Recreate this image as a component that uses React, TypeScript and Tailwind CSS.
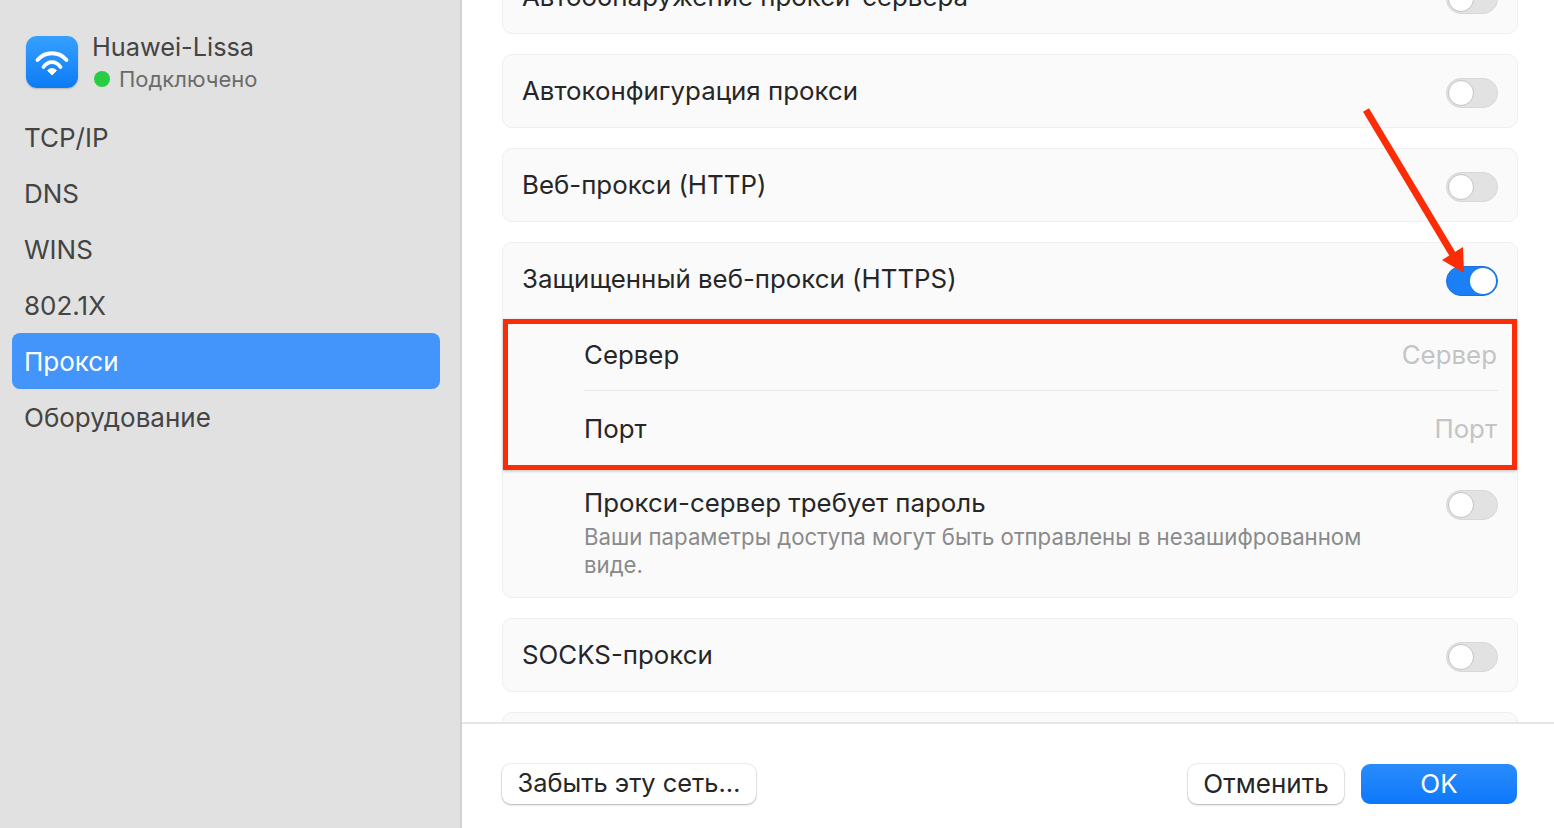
import { FC, ReactNode } from 'react';

const FONT = "font-['Inter','Noto_Sans',sans-serif]";

const Toggle: FC<{ on?: boolean }> = ({ on }) =>
  on ? (
    <div className="mt-[4px] flex h-[30px] w-[52px] shrink-0 items-center justify-end rounded-full border border-[#1a6fd8] bg-[#1b80f5]">
      <div className="mr-px h-[26px] w-[26px] rounded-full bg-white" />
    </div>
  ) : (
    <div className="mt-[4px] flex h-[30px] w-[52px] shrink-0 items-center rounded-full border border-[#d8d8d8] bg-[#e2e2e2]">
      <div className="ml-px h-[26px] w-[26px] rounded-full border border-[#c4c4c4] bg-white" />
    </div>
  );

const Card: FC<{ children?: ReactNode; className?: string }> = ({ children, className }) => (
  <div className={`rounded-[10px] border border-[#efefef] bg-[#fafafa] ${className ?? ''}`}>{children}</div>
);

const ToggleRow: FC<{ label: string; on?: boolean }> = ({ label, on }) => (
  <div className="flex h-[72px] items-center justify-between pl-[19px] pr-[19px] text-[25.85px] text-[#262626]">
    <span>{label}</span>
    <Toggle on={on} />
  </div>
);

const WifiIcon = () => (
  <div className="flex h-[52px] w-[52px] items-center justify-center rounded-[11px] bg-gradient-to-b from-[#35a0ff] to-[#0a7bf5] shadow-[0_1px_2px_rgba(0,0,0,0.2)]">
    <svg width="38" height="30" viewBox="0 0 38 30" fill="none">
      <path d="M4.5 13C12 4 26 4 33.5 13" stroke="white" strokeWidth="3.8" strokeLinecap="round" />
      <path d="M10.5 20C15 13.5 23 13.5 27.5 20" stroke="white" strokeWidth="3.8" strokeLinecap="round" />
      <path d="M19 28L14.5 23.5C17 21 21 21 23.5 23.5Z" fill="white" stroke="white" strokeWidth="1" strokeLinejoin="round" />
    </svg>
  </div>
);

const NAV = ['TCP/IP', 'DNS', 'WINS', '802.1X', 'Прокси', 'Оборудование'];

const Sidebar = () => (
  <aside className="flex w-[462px] shrink-0 flex-col border-r-2 border-[#d2d2d2] bg-[#e1e1e1] pl-[12px] pr-[20px] pt-[32px]">
    <div className="flex items-start gap-[14px] pl-[14px]">
      <div className="pt-[4px]">
        <WifiIcon />
      </div>
      <div className="flex flex-col">
        <span className="text-[25.3px] leading-[30px] text-[#444444]">Huawei-Lissa</span>
        <span className="mt-[2px] flex items-center gap-[9px] pl-[2px] text-[22px] leading-[30px] text-[#6b6b6b]">
          <span className="h-[16px] w-[16px] rounded-full bg-[#28cd41]" />
          Подключено
        </span>
      </div>
    </div>
    <nav className="mt-[15px] flex flex-col">
      {NAV.map((item) => (
        <div
          key={item}
          className={`flex h-[56px] items-center rounded-[8px] pl-[12px] text-[26px] ${
            item === 'Прокси' ? 'bg-[#4394fb] text-white' : 'text-[#444444]'
          }`}
        >
          {item}
        </div>
      ))}
    </nav>
  </aside>
);

const Annotations = () => (
  <>
    <div className="absolute left-[503px] top-[319px] h-[151px] w-[1014px] border-[5px] border-[#fb2c06] shadow-[0_1px_3px_rgba(0,0,0,0.25)]" />
    <svg className="absolute left-[1355px] top-[100px]" width="120" height="180" viewBox="0 0 120 180" fill="none">
      <path d="M11 10L98 155" stroke="#fb2c06" strokeWidth="7" />
      <path d="M109 173L87 160L108 147Z" fill="#fb2c06" />
    </svg>
  </>
);

export default function App() {
  return (
    <div className={`relative flex h-[828px] w-[1554px] overflow-hidden bg-white ${FONT}`}>
      <Sidebar />
      <main className="flex min-w-0 flex-1 flex-col">
        <div className="flex-1 overflow-hidden pl-[40px] pr-[36px]">
          <div className="-mt-[40px] flex flex-col gap-[20px]">
            <Card>
              <ToggleRow label="Автообнаружение прокси-сервера" />
            </Card>
            <Card>
              <ToggleRow label="Автоконфигурация прокси" />
            </Card>
            <Card>
              <ToggleRow label="Веб-прокси (HTTP)" />
            </Card>
            <Card className="h-[356px]">
              <ToggleRow label="Защищенный веб-прокси (HTTPS)" on />
              <div className="pl-[81px] pr-[19px] text-[25.85px] text-[#262626]">
                <div className="flex h-[76px] items-center justify-between border-b border-[#e8e8e8] pt-[5px]">
                  <span>Сервер</span>
                  <span className="pr-px text-[#c4c4c4]">Сервер</span>
                </div>
                <div className="flex h-[76px] items-center justify-between">
                  <span>Порт</span>
                  <span className="pr-px text-[#c4c4c4]">Порт</span>
                </div>
                <div className="flex items-start justify-between pt-[19px]">
                  <div className="w-[800px]">
                    <div className="leading-[34px]">Прокси-сервер требует пароль</div>
                    <div className="mt-[3px] text-[22.2px] leading-[28px] text-[#8a8a8a]">
                      Ваши параметры доступа могут быть отправлены в незашифрованном виде.
                    </div>
                  </div>
                  <Toggle />
                </div>
              </div>
            </Card>
            <Card>
              <ToggleRow label="SOCKS-прокси" />
            </Card>
            <Card className="h-[74px]" />
          </div>
        </div>
        <footer className="flex h-[106px] shrink-0 items-start justify-between border-t-2 border-[#e6e6e6] bg-white pl-[40px] pr-[37px] pt-[40px]">
          <button className="h-[40px] w-[254px] rounded-[9px] bg-white pb-[2px] text-[25.4px] text-[#262626] shadow-[0_0_0_1px_rgba(0,0,0,0.06),0_1px_2px_rgba(0,0,0,0.25)]">
            Забыть эту сеть…
          </button>
          <div className="flex gap-[17px]">
            <button className="h-[40px] w-[156px] rounded-[9px] bg-white pb-[2px] text-[26px] text-[#262626] shadow-[0_0_0_1px_rgba(0,0,0,0.06),0_1px_2px_rgba(0,0,0,0.25)]">
              Отменить
            </button>
            <button className="h-[40px] w-[156px] rounded-[9px] bg-gradient-to-b from-[#2a8cfb] to-[#0a78fb] pb-[2px] text-[26px] text-white">
              OK
            </button>
          </div>
        </footer>
      </main>
      <Annotations />
    </div>
  );
}
